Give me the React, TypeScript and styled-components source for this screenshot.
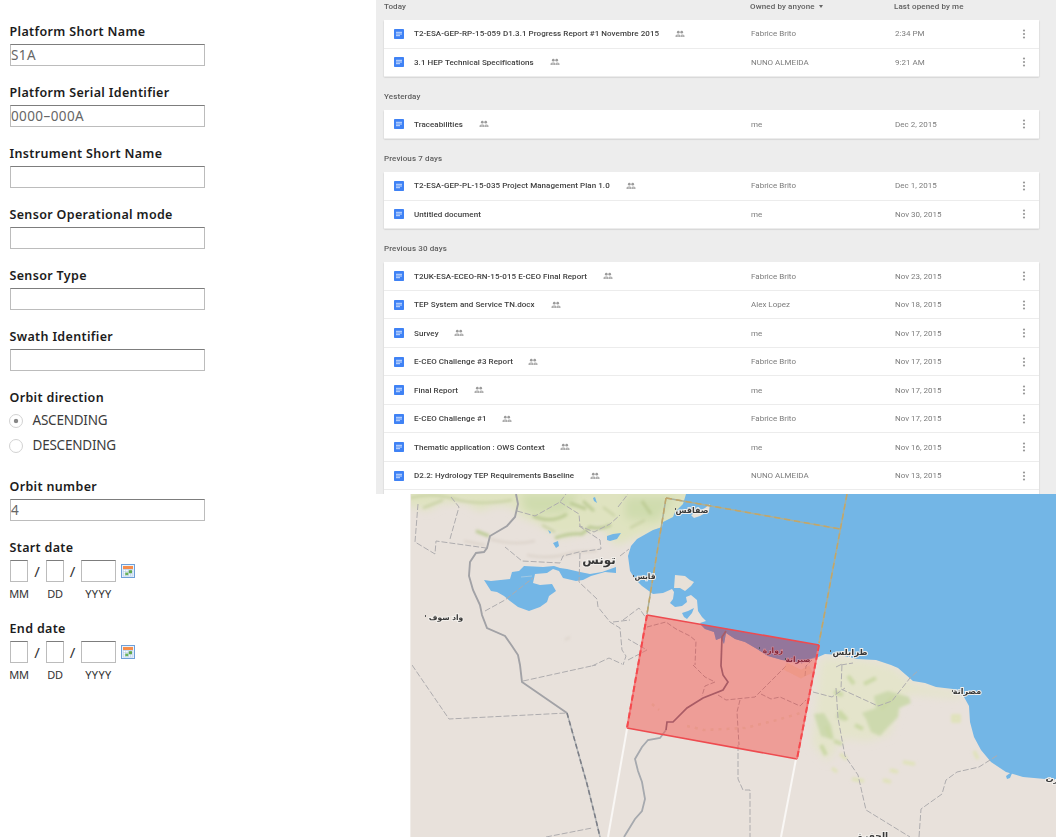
import React from "react";
import styled, { createGlobalStyle } from "styled-components";

const Global = createGlobalStyle`
  * { box-sizing: border-box; }
  body { margin: 0; background: #fff; overflow: hidden; }
`;

const Page = styled.div`
  display: flex;
  width: 1056px;
  height: 837px;
  overflow: hidden;
  font-family: "Open Sans", "Noto Sans", sans-serif;
`;

const Form = styled.form`
  width: 376px;
  padding: 22px 0 0 10px;
  flex: none;
`;

const Field = styled.div<{ $h?: number }>`
  height: ${(p) => p.$h ?? 61}px;
`;

const Label = styled.label`
  display: block;
  height: 22px;
  padding-top: 1px;
  margin-left: -0.5px;
  font: 600 12.5px/18px "Noto Sans", sans-serif;
  color: #1c1c1c;
  white-space: nowrap;
  letter-spacing: 0.34px;
`;

const Input = styled.input<{ $w?: number }>`
  display: block;
  width: ${(p) => p.$w ?? 195}px;
  height: 22px;
  padding: 0 0 1px;
  border: 1px solid #bcbcbc;
  border-top-color: #7d7d7d;
  border-radius: 0;
  outline: none;
  background: #fff;
  color: #666;
  font: 13.5px "Noto Sans", sans-serif;
  letter-spacing: 0.4px;
`;

const RadioGroup = styled.div`
  margin-top: -2px;
`;

const RadioRow = styled.div`
  display: flex;
  align-items: center;
  gap: 10px;
  height: 25px;
  margin-left: -1.5px;
  font: 13.5px/25px "Noto Sans", sans-serif;
  letter-spacing: -0.22px;
  color: #3c3c3c;
`;

const Radio = styled.span<{ $on?: boolean }>`
  width: 14px;
  height: 14px;
  border: 1px solid #d2d2d2;
  border-radius: 50%;
  background: ${(p) => (p.$on ? "radial-gradient(circle, #888 0 1.8px, #fff 2.6px)" : "#fff")};
`;

const DateGrid = styled.div`
  display: grid;
  grid-template-columns: 18px 18px 18px 17px 35px 19px;
  grid-template-rows: 22px 24px;
  align-items: center;
  justify-items: center;
  color: #333;
  font: 15px "Noto Sans", sans-serif;
  svg { justify-self: end; }
`;

const Part = styled.span<{ $col: number }>`
  grid-column: ${(p) => p.$col};
  font-size: 11px;
  line-height: 24px;
  letter-spacing: ${(p) => (p.$col === 5 ? 0.4 : -0.2)}px;
`;

const Content = styled.main`
  width: 680px;
  flex: none;
`;

const Files = styled.section`
  height: 494px;
  overflow: hidden;
  background: #ededed;
  padding: 0 17px 0 8px;
  font-family: Roboto, sans-serif;
`;

const Columns = styled.div<{ $first?: boolean }>`
  display: grid;
  grid-template-columns: 366px 144px 1fr;
  height: ${(p) => (p.$first ? 20 : 33.25)}px;
  padding-top: ${(p) => (p.$first ? 0.6 : 14)}px;
  font-size: 8px;
  font-weight: 500;
  line-height: 12px;
  letter-spacing: 0.12px;
  color: #5e5e5e;
  filter: blur(0.45px);
`;

const Caret = styled.span`
  display: inline-block;
  margin-left: 2px;
  border: 2.8px solid transparent;
  border-top: 3px solid #666;
  border-bottom: 0;
  vertical-align: 1px;
`;

const Card = styled.div<{ $open?: boolean }>`
  padding-bottom: ${(p) => (p.$open ? 12 : 0)}px;
  background: #fff;
  box-shadow: 0 0.5px 1.5px rgba(0, 0, 0, 0.22);
`;

const Row = styled.div`
  display: grid;
  grid-template-columns: 367px 144px 1fr 10px;
  align-items: center;
  height: 28.5px;
  padding: 0 10.5px 0 0;
  border-bottom: 1px solid #ececec;
  font-size: 8px;
  color: #7c7c7c;
  & > * { filter: blur(0.45px); }
`;

const Name = styled.div`
  display: flex;
  align-items: center;
  padding-left: 10px;
  color: #404040;
  font-weight: 500;
  letter-spacing: 0.06px;
  white-space: nowrap;
  svg { flex: none; }
`;

const Title = styled.span<{ $w: number }>`
  width: ${(p) => p.$w}px;
  margin: 0 15px 0 10px;
`;

const MapBox = styled.section`
  width: 646px;
  height: 343px;
  margin-left: 34px;
  overflow: hidden;
  background: #e8e1db;
  svg { display: block; }
`;

const DocIcon = () => (
  <svg width="10" height="10" viewBox="0 0 10 10">
    <rect width="10" height="10" rx="0.7" fill="#3f82f5" />
    <path d="M2 3.3h6M2 5h6M2 6.7h4" stroke="#dce8ff" strokeWidth="0.9" />
  </svg>
);

const People = () => (
  <svg width="10" height="8" viewBox="0 0 10 8" fill="#9a9a9a">
    <circle cx="3.3" cy="2.2" r="1.35" />
    <circle cx="6.7" cy="2.2" r="1.35" />
    <path d="M.6 6.9V5.6Q1.2 4.5 3.3 4.5 5 4.5 5.5 5.6V6.9zM6.2 6.9V5.2L6.6 4.5Q8.9 4.6 9.4 5.6V6.9z" />
    <path d="M1.5 6h3M7 6h1.6" stroke="#fff" strokeWidth="0.7" />
  </svg>
);

const Dots = () => (
  <svg width="10" height="10" viewBox="0 0 10 10" fill="#999">
    <circle cx="5" cy="1.5" r="1.1" />
    <circle cx="5" cy="5" r="1.1" />
    <circle cx="5" cy="8.5" r="1.1" />
  </svg>
);

const Calendar = () => (
  <svg width="14" height="14" viewBox="0 0 14 14">
    <rect x="0.5" y="0.5" width="13" height="13" fill="#eaf4fd" stroke="#6e9fd8" />
    <rect x="2" y="2" width="10" height="3" fill="#f58d4c" />
    <rect x="2" y="5.5" width="10" height="6.5" fill="#fff" />
    <path d="M2 5.5h10M2 7.7h10M2 9.9h10M2 12h10M2.3 5.5V12M4.7 5.5V12M7.2 5.5V12M9.6 5.5V12M11.8 5.5V12" stroke="#a9c6e6" strokeWidth="0.6" />
    <rect x="7.8" y="6.2" width="3.2" height="3" fill="#5ea84e" />
    <rect x="4.3" y="8.6" width="3" height="2.6" fill="#6ab35a" />
  </svg>
);

type File = [title: string, width: number, owner: string, opened: string, shared: boolean];

const groups: { name: string; files: File[] }[] = [
  {
    name: "Today",
    files: [
      ["T2-ESA-GEP-RP-15-059 D1.3.1 Progress Report #1 Novembre 2015", 246, "Fabrice Brito", "2:34 PM", true],
      ["3.1 HEP Technical Specifications", 121, "NUNO ALMEIDA", "9:21 AM", true],
    ],
  },
  { name: "Yesterday", files: [["Traceabilities", 50, "me", "Dec 2, 2015", true]] },
  {
    name: "Previous 7 days",
    files: [
      ["T2-ESA-GEP-PL-15-035 Project Management Plan 1.0", 197, "Fabrice Brito", "Dec 1, 2015", true],
      ["Untitled document", 68, "me", "Nov 30, 2015", false],
    ],
  },
  {
    name: "Previous 30 days",
    files: [
      ["T2UK-ESA-ECEO-RN-15-015 E-CEO Final Report", 174, "Fabrice Brito", "Nov 23, 2015", true],
      ["TEP System and Service TN.docx", 122, "Alex Lopez", "Nov 18, 2015", true],
      ["Survey", 25, "me", "Nov 17, 2015", true],
      ["E-CEO Challenge #3 Report", 99, "Fabrice Brito", "Nov 17, 2015", true],
      ["Final Report", 45, "me", "Nov 17, 2015", true],
      ["E-CEO Challenge #1", 73, "Fabrice Brito", "Nov 17, 2015", true],
      ["Thematic application : OWS Context", 131, "me", "Nov 16, 2015", true],
      ["D2.2: Hydrology TEP Requirements Baseline", 161, "NUNO ALMEIDA", "Nov 13, 2015", true],
    ],
  },
];

const places: [string, number, number, number][] = [
  ["تونس", 189, 70, 12],
  ["صفاقس", 282, 19, 8],
  ["قابس", 235, 85, 7.5],
  ["واد سوف", 36, 126, 7.5],
  ["طرابلس", 440, 161, 8.5],
  ["مصراتة", 557, 200, 8],
  ["الجفرة", 463, 345, 9],
  ["سرت", 646, 288, 8],
];

const RegionMap = () => (
  <svg width="646" height="343" viewBox="0 0 646 343" fill="none" fontFamily="DejaVu Sans, sans-serif">
    <defs>
      <filter id="soft" x="-20%" y="-20%" width="140%" height="140%"><feGaussianBlur stdDeviation="4" /></filter>
      <filter id="ridge" x="-20%" y="-20%" width="140%" height="140%"><feGaussianBlur stdDeviation="1.7" /></filter>
      <filter id="edge" x="0" y="0" width="100%" height="100%"><feGaussianBlur stdDeviation="0.5" /></filter>
    </defs>
    <rect width="646" height="343" fill="#e8e1db" />
    <g filter="url(#soft)">
      <path d="M-10-10H280V25L226 44 206 51 190 32 173 39 150 43 132 31 112 23 102 12 84 11 70 17 55 8 30 9 18 16-5 11z" fill="#dfe3c0" />
      <path d="M112 0H170L155 18 127 20 114 16zM215 3H265L247 27 215 25z" fill="#cfdcae" />
      <path d="M411 164L450 165 481 172 504 190 548 198 552 205 500 200 489 207 480 240 458 247 432 244 418 268 402 250z" fill="#e4e4cb" />
    </g>
    <g filter="url(#ridge)">
      <path d="M145 44Q160 39 172 40L180 33Q190 36 201 31M123 22Q142 30 157 20M173 7L184 17M232 7L241 20M160 9L176 15M66 37L79 42" stroke="#bccb94" strokeWidth="3" />
      <path d="M0 4Q22 -2 45 5T102 6M13 14L33 6M132 31L145 38M193 13L205 22M220 34L235 26" stroke="#c6d0a0" strokeWidth="2" />
      <path d="M464 202L478 197 499 203 501 209 489 214 488 223 478 233 470 242 461 238 456 225 452 219 466 214zM404 220L414 219 421 231 424 246 411 242zM428 217l8 4-2 6-8-3z" fill="#cdd9ae" />
      <path d="M424 198l9 3M438 182l6 8M454 190l12-6M471 215l12-12M429 217l8 9M424 247l8 3M445 231l8 4M416 232l5 12M411 251l5 10" stroke="#cbd8a6" strokeWidth="4" />
      <path d="M480 276l8 2M473 286l8 2M543 222h6v5h-6zM564 257l4 8M442 285l12 2M493 268l12 2M430 260l7 5M422 274l5 4" stroke="#dfe2b8" strokeWidth="3.5" />
      <path d="M80 45Q105 52 125 47M54 47L75 51M117 61Q140 66 165 58L187 57M155 146l5-3" stroke="#dad1c8" strokeWidth="2" />
    </g>
    <g filter="url(#edge)">
      <path
        d="M276 0L273 10 265 18 263 23 253 28 252 33 243 36 227 45 221 52 218 62 220 77 225 85 232 92 243 100 253 99 262 95 264 98 263 105 260 109 265 113 272 112 277 108 276 103 281 101 287 106 288 117 292 123 296 127 290 129 295 135 304 138 306 146 311 144 314 150 316 139 325 145 335 148 347 155 358 162 372 166 388 168 406 164 415 160 430 161 447 165 466 166 481 171 488 174 503 187 515 189 526 193 543 195 554 203 559 212 560 228 564 243 571 256 581 268 596 278 613 283 646 286V0z"
        fill="#73b6e6"
      />
      <path d="M265 81L275 82 280 86 284 88 281 92 275 97 270 94 264 94zM281 21L287 18 295 14 300 10 299 17 290 22 284 24z" fill="#e7e1d8" />
      <path d="M272 119L278 117 284 114 282 119 277 125 274 123z" fill="#73b6e6" />
      <path
        d="M74 86L81 87 100 85 102 78 109 77 114 72 133 73 144 72 150 74 157 75 170 78 180 80 192 78 206 73 206 79 195 78 181 82 173 86 166 87 153 84 149 77 143 75 137 79 125 80 123 89 130 91 142 90 146 97 139 102 137 108 130 113 119 117 108 113 100 107 94 102 87 98 81 97zM143 49L148 47 149 52 146 54zM197 42L203 40 211 39 207 45 200 47 197 46zM138 36l3 2-1 2zM183 4l2-1 2 6-3-2zM596 282L603 277 600 284 597 285z"
        fill="#73b6e6"
      />
      <path d="M111 83L122 82" stroke="#a2c9e3" />

      <g stroke="#aeacae" strokeWidth="1" strokeDasharray="6 2">
        <path d="M8 10L5 48 25 60 26 47 76 54M41 3L49 13 40 45M2 171L39 225 157 219M113 187L186 171M136 343L182 334M107 17L125 22 150 8 156 0M150 8L161 15 169 20 170 32 184 38 200 30 210 21M169 32L190 46 191 55 169 58 153 62 150 69 112 67 95 53M170 59L169 88 187 105 188 113 200 128 210 134 212 156 216 162 213 171M203 128L220 126M182 172L199 164 212 170M210 62L219 55M208 13L218 0M75 117L95 106 123 84M213 126L229 114 236 124M218 166L237 156 218 145" />
        <path d="M426 173L432 170 431 195 468 212 482 207 500 184 509 176M431 171l12-2M426 194L428 224 435 262 448 281 456 316 500 343M509 343L511 315 532 300 536 286 547 278 569 273 588 261M328 251L328 285 333 296H340V343M403 198L422 203 435 194" />
      </g>
      <path d="M106 0L108 10 105 23 97 32 80 42 77 54 74 58 66 59 60 68 59 82 63 96 70 111 72 121 77 134 95 142 102 152 108 161 110 171 112 188 157 219" stroke="#a2a2a6" strokeWidth="1.9" />
      <path d="M157 219L177 290 185 322 190 343" stroke="#b6b8ba" strokeWidth="1.5" />
      <path d="M157 219L177 290 185 322 190 343" stroke="#7b7e86" strokeWidth="1.5" strokeDasharray="5 3" />
      <path d="M256 236L250 244 238 246 232 253 225 265 228 277 232 288 235 305 232 317 225 325 214 343" stroke="#a6a9ae" strokeWidth="1.8" />
      <path d="M217 235L198 343M386 265L371 343" stroke="#f9f7f5" strokeWidth="2" />

      <path d="M237 121L409 151 387 265 217 234z" fill="#f4605a" fillOpacity="0.53" />
      <path d="M290 130L409 151 406 163 388 168 372 166 358 162 347 155 335 148 325 145 316 139 314 150 311 144 306 146 304 138 295 135z" fill="#94769b" />
      <path d="M316 137L312 143 311 172 313 181 318 188 313 196 293 204 277 214 263 228 257 228 256 236" stroke="#a95b65" strokeWidth="1.7" />
      <path d="M237 133L256 128 266 135 280 142 286 147 285 171M283 171L295 183 305 188 295 192 292 202M308 201L316 206 345 203 377 171M351 200L361 205 370 203 390 212 396 206M330 206L327 218 329 251M395 182L396 172 402 166" stroke="#c77878" strokeWidth="1" strokeDasharray="5 2" />
      <path d="M277 232L294 236 335 234 367 226 394 218M242 210L249 216" stroke="#e9988b" strokeWidth="2.5" strokeDasharray="3 5" />
      <path d="M375 172l16 8 10-5" stroke="#ee9274" strokeWidth="8" opacity="0.4" />
      <path d="M237 121L409 151M217 234L387 265" stroke="#ee4b50" strokeWidth="1.7" />
      <path d="M237 121L217 234M409 151L387 265" stroke="#f27a7a" strokeWidth="1.8" />
      <path d="M237 121L217 234M409 151L387 265" stroke="#f5494d" strokeWidth="2" strokeDasharray="6 3" />

      <path d="M256 4L237 120M437 0L409 149M256 4L430 35" stroke="#a9b09c" strokeWidth="1.5" />
      <path d="M256 4L237 120M437 0L409 149M256 4L430 35" stroke="#c2a669" strokeWidth="1.5" strokeDasharray="6 4" />

      <g textAnchor="middle" fill="#383838" stroke="#f3f0ec" strokeWidth="2" paintOrder="stroke" direction="rtl" fontWeight="bold">
        {places.map(([name, x, y, size]) => (
          <text key={name} x={x} y={y} fontSize={size}>{name}</text>
        ))}
      </g>
      <g textAnchor="middle" fill="#872c3d" stroke="#dc949f" strokeWidth="1" paintOrder="stroke" direction="rtl" fontSize="7.5" fontWeight="bold">
        <text x="363" y="159">زوارة</text>
        <text x="388" y="168">صبراتة</text>
      </g>
      <path d="M265 15h1M223 82h1M15 122h1M349 154h1M375 165h1M420 157h1M542 197h1M637 286h1" stroke="#555" strokeWidth="2" />
    </g>
    <path d="M0 0V343" stroke="#f0ece8" strokeWidth="2" />
  </svg>
);

const TextField = ({ label, value = "" }: { label: string; value?: string }) => (
  <Field>
    <Label>{label}</Label>
    <Input defaultValue={value} />
  </Field>
);

const DateField = ({ label }: { label: string }) => (
  <Field $h={81}>
    <Label>{label}</Label>
    <DateGrid>
      <Input $w={18} />
      <span>/</span>
      <Input $w={18} />
      <span>/</span>
      <Input $w={35} />
      <Calendar />
      <Part $col={1}>MM</Part>
      <Part $col={3}>DD</Part>
      <Part $col={5}>YYYY</Part>
    </DateGrid>
  </Field>
);

export default function App() {
  return (
    <>
      <Global />
      <Page>
        <Form>
          <TextField label="Platform Short Name" value="S1A" />
          <TextField label="Platform Serial Identifier" value="0000–000A" />
          <TextField label="Instrument Short Name" />
          <TextField label="Sensor Operational mode" />
          <TextField label="Sensor Type" />
          <TextField label="Swath Identifier" />
          <Field $h={89}>
            <Label>Orbit direction</Label>
            <RadioGroup>
              <RadioRow><Radio $on />ASCENDING</RadioRow>
              <RadioRow><Radio />DESCENDING</RadioRow>
            </RadioGroup>
          </Field>
          <TextField label="Orbit number" value="4" />
          <DateField label="Start date" />
          <DateField label="End date" />
        </Form>
        <Content>
          <Files>
            {groups.map((group, i) => (
              <React.Fragment key={group.name}>
                <Columns $first={i === 0}>
                  <span>{group.name}</span>
                  {i === 0 && <span>Owned by anyone <Caret /></span>}
                  {i === 0 && <span>Last opened by me</span>}
                </Columns>
                <Card $open={i === groups.length - 1}>
                  {group.files.map(([title, width, owner, opened, shared]) => (
                    <Row key={title}>
                      <Name>
                        <DocIcon />
                        <Title $w={width}>{title}</Title>
                        {shared && <People />}
                      </Name>
                      <span>{owner}</span>
                      <span>{opened}</span>
                      <Dots />
                    </Row>
                  ))}
                </Card>
              </React.Fragment>
            ))}
          </Files>
          <MapBox><RegionMap /></MapBox>
        </Content>
      </Page>
    </>
  );
}
